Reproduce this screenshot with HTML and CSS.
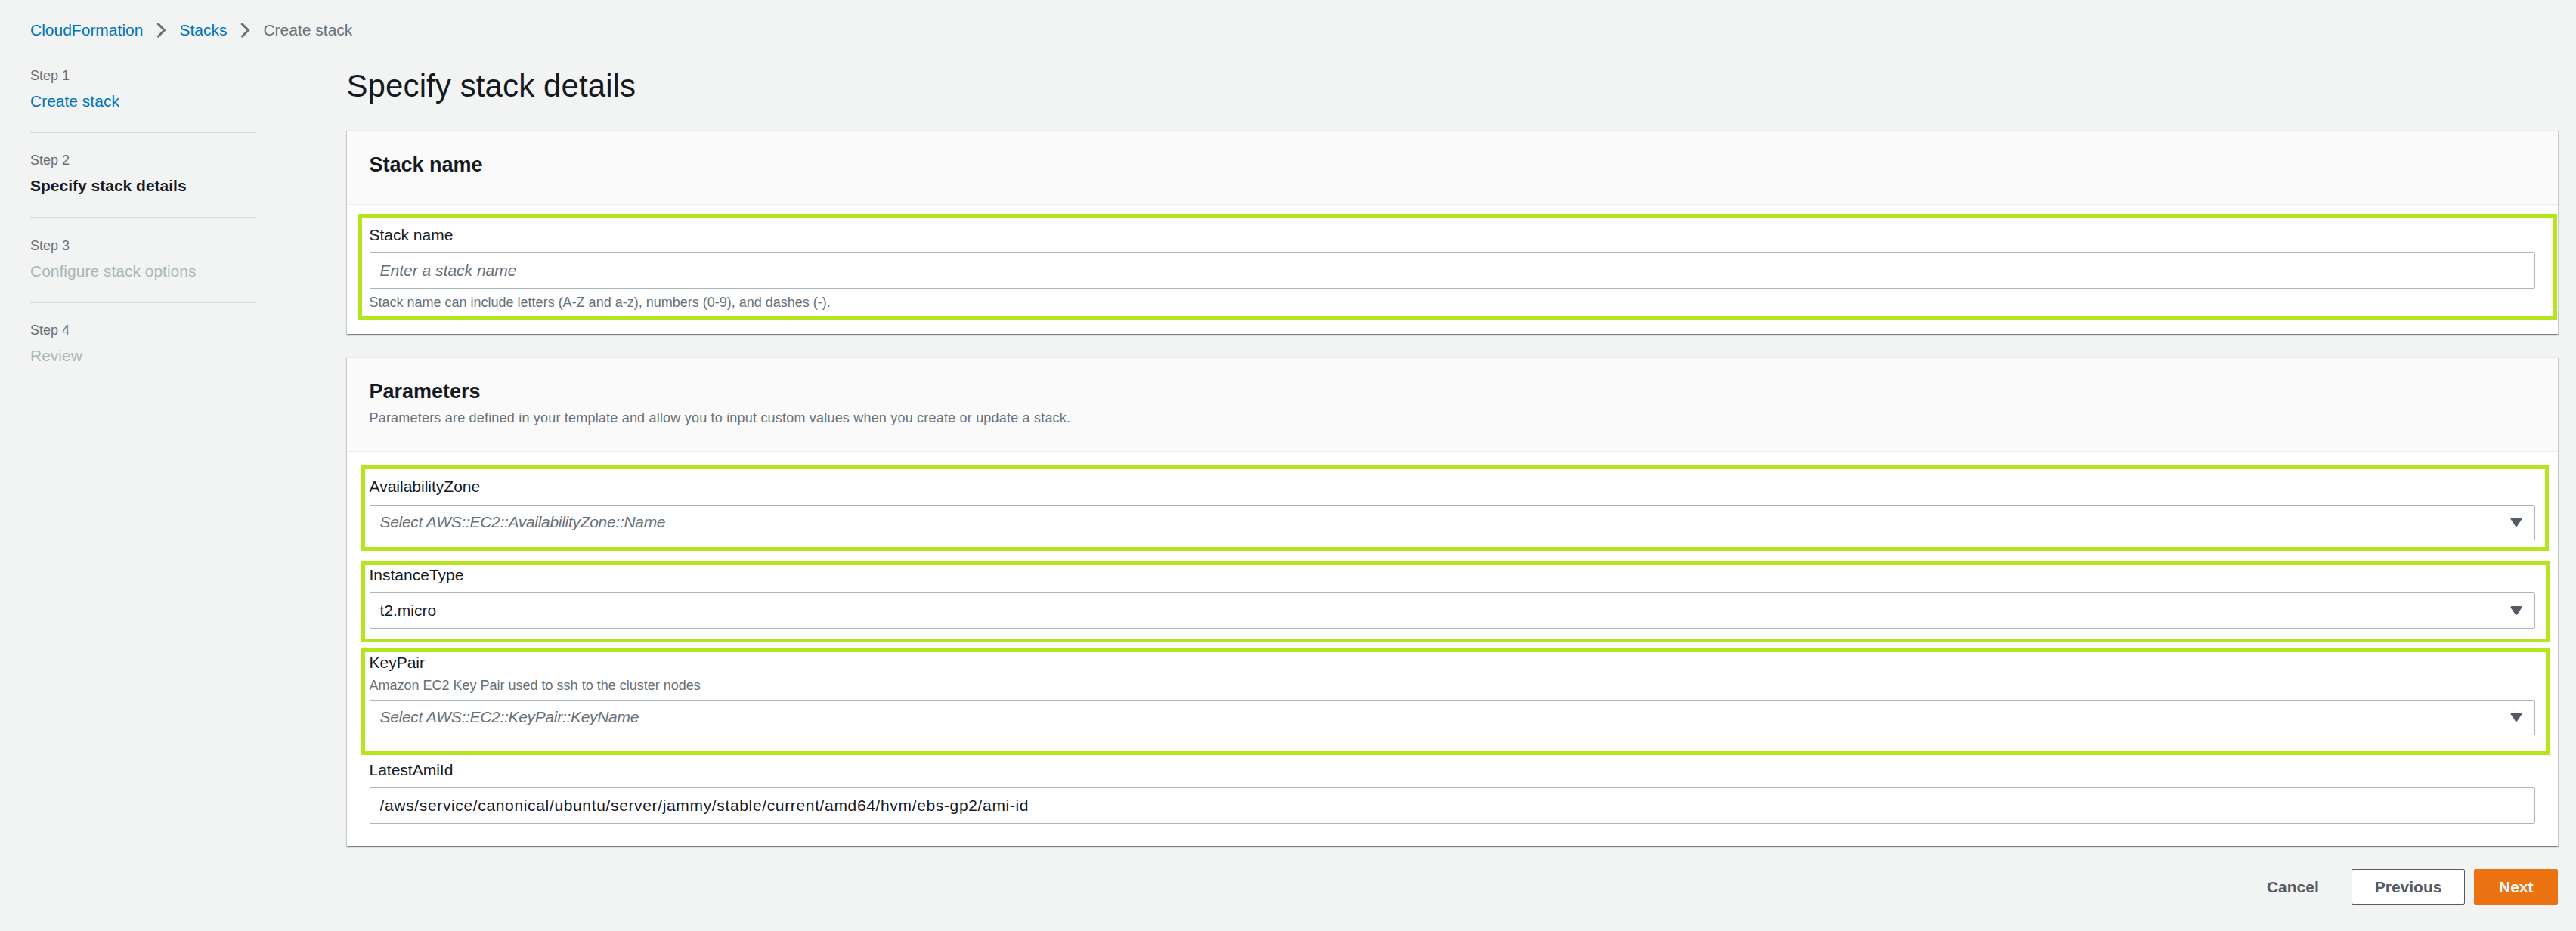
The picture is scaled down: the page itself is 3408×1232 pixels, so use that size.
FILE: index.html
```html
<!DOCTYPE html>
<html lang="en">
<head>
<meta charset="utf-8">
<title>Create stack - CloudFormation</title>
<link rel="stylesheet" href="styles.css">
</head>
<body>
<nav class="breadcrumbs">
  <a class="crumb crumb--link" href="#">CloudFormation</a>
  <svg class="crumb-sep" viewBox="0 0 16 16" width="24" height="24" aria-hidden="true"><path d="M5 2l6 6-6 6" fill="none" stroke="#687078" stroke-width="2"/></svg>
  <a class="crumb crumb--link" href="#">Stacks</a>
  <svg class="crumb-sep" viewBox="0 0 16 16" width="24" height="24" aria-hidden="true"><path d="M5 2l6 6-6 6" fill="none" stroke="#687078" stroke-width="2"/></svg>
  <span class="crumb crumb--current">Create stack</span>
</nav>

<div class="layout">
  <aside class="steps">
    <div class="step">
      <div class="step__label">Step 1</div>
      <a class="step__title step__title--link" href="#">Create stack</a>
    </div>
    <div class="step">
      <div class="step__label">Step 2</div>
      <div class="step__title step__title--active">Specify stack details</div>
    </div>
    <div class="step">
      <div class="step__label">Step 3</div>
      <div class="step__title step__title--disabled">Configure stack options</div>
    </div>
    <div class="step">
      <div class="step__label">Step 4</div>
      <div class="step__title step__title--disabled">Review</div>
    </div>
  </aside>

  <main class="content">
    <h1 class="page-title">Specify stack details</h1>

    <section class="card card--first">
      <header class="card__header card__header--plain">
        <h2 class="card__title">Stack name</h2>
      </header>
      <div class="card__body card__body--name">
        <div class="field mark mark--name">
          <label class="field__label">Stack name</label>
          <input class="control control--input" type="text" placeholder="Enter a stack name">
          <div class="field__hint">Stack name can include letters (A-Z and a-z), numbers (0-9), and dashes (-).</div>
        </div>
      </div>
    </section>

    <section class="card">
      <header class="card__header">
        <h2 class="card__title">Parameters</h2>
        <p class="card__desc">Parameters are defined in your template and allow you to input custom values when you create or update a stack.</p>
      </header>
      <div class="card__body card__body--params">
        <div class="field mark mark--az">
          <label class="field__label">AvailabilityZone</label>
          <div class="control control--select">
            <span class="control__placeholder">Select AWS::EC2::AvailabilityZone::Name</span>
            <svg class="caret" viewBox="0 0 16 16" width="24" height="24" aria-hidden="true"><path d="M4 5h8l-4 6-4-6z" fill="#545b64" stroke="#545b64" stroke-width="2" stroke-linejoin="round"/></svg>
          </div>
        </div>
        <div class="field mark mark--type">
          <label class="field__label">InstanceType</label>
          <div class="control control--select">
            <span class="control__value">t2.micro</span>
            <svg class="caret" viewBox="0 0 16 16" width="24" height="24" aria-hidden="true"><path d="M4 5h8l-4 6-4-6z" fill="#545b64" stroke="#545b64" stroke-width="2" stroke-linejoin="round"/></svg>
          </div>
        </div>
        <div class="field mark mark--key">
          <label class="field__label">KeyPair</label>
          <div class="field__desc">Amazon EC2 Key Pair used to ssh to the cluster nodes</div>
          <div class="control control--select control--after-desc">
            <span class="control__placeholder">Select AWS::EC2::KeyPair::KeyName</span>
            <svg class="caret" viewBox="0 0 16 16" width="24" height="24" aria-hidden="true"><path d="M4 5h8l-4 6-4-6z" fill="#545b64" stroke="#545b64" stroke-width="2" stroke-linejoin="round"/></svg>
          </div>
        </div>
        <div class="field">
          <label class="field__label">LatestAmiId</label>
          <input class="control control--input control--path" type="text" value="/aws/service/canonical/ubuntu/server/jammy/stable/current/amd64/hvm/ebs-gp2/ami-id">
        </div>
      </div>
    </section>

    <div class="actions">
      <button class="btn btn--link" type="button">Cancel</button>
      <button class="btn btn--normal" type="button">Previous</button>
      <button class="btn btn--primary" type="button">Next</button>
    </div>
  </main>
</div>
</body>
</html>
```
FILE: styles.css
```css
* {
  box-sizing: border-box;
}

body {
  margin: 0;
  background: #f2f3f3;
  color: #16191f;
  font-family: "Liberation Sans", Arial, sans-serif;
}

/* Breadcrumbs */
.breadcrumbs {
  display: flex;
  align-items: center;
  height: 56px;
  padding: 23px 0 0 40px;
  font-size: 21px;
  line-height: 33px;
}

.crumb {
  text-decoration: none;
}

.crumb--link {
  color: #0073bb;
}

.crumb--current {
  color: #687078;
}

.crumb-sep {
  display: block;
  margin: 0 12px;
  flex: none;
}

/* Layout */
.layout {
  display: flex;
  align-items: flex-start;
  padding: 0 24px 0 40px;
}

.steps {
  width: 299px;
  flex: none;
  padding-top: 7px;
  margin-right: 119.5px;
}

.step {
  padding: 24.5px 0 25px;
  border-bottom: 1px solid #d5dbdb;
}

.step:last-child {
  border-bottom: none;
}

.step__label {
  font-size: 18px;
  line-height: 24px;
  color: #687078;
}

.step__title {
  display: block;
  margin-top: 5px;
  font-size: 21px;
  line-height: 33px;
  text-decoration: none;
}

.step__title--link {
  color: #0073bb;
}

.step__title--active {
  font-weight: 700;
  color: #16191f;
}

.step__title--disabled {
  color: #aab7b8;
}

.content {
  flex: 1;
  min-width: 0;
}

.page-title {
  margin: 31px 0 0;
  font-size: 42px;
  line-height: 54px;
  font-weight: 400;
  color: #16191f;
  letter-spacing: 0.1px;
}

/* Cards */
.card {
  margin-top: 30.5px;
  background: #fff;
  border-top: 1px solid #eaeded;
  box-shadow: 0 1px 1px 0 rgba(0, 28, 36, 0.3), 1px 1px 1px 0 rgba(0, 28, 36, 0.15), -1px 1px 1px 0 rgba(0, 28, 36, 0.15);
}

.card--first {
  margin-top: 31px;
}

.card__header {
  background: #fafafa;
  border-bottom: 1px solid #eaeded;
  padding: 28.5px 30px 32px;
}

.card__header--plain {
  padding-bottom: 35px;
}

.card__title {
  margin: 0;
  font-size: 27px;
  line-height: 33px;
  font-weight: 700;
  color: #16191f;
}

.card__desc {
  margin: 5.5px 0 0;
  font-size: 18px;
  line-height: 24px;
  color: #687078;
  letter-spacing: 0.2px;
}

.card__body {
  padding: 28px 30px 30px;
}

.card__body--params {
  padding-top: 34.5px;
}

/* Fields */
.field {
  position: relative;
}

.field + .field {
  margin-top: 33.5px;
}

.field__label {
  display: block;
  font-size: 21px;
  line-height: 24px;
  color: #16191f;
}

.field__desc {
  margin-top: 5.5px;
  font-size: 18px;
  line-height: 24px;
  color: #687078;
}

.field__hint {
  margin-top: 6.5px;
  font-size: 18px;
  line-height: 24px;
  color: #687078;
}

.control {
  display: flex;
  align-items: center;
  width: 100%;
  height: 47.5px;
  margin-top: 11.5px;
  padding: 0 12px 0 13px;
  border: 1px solid #aab7b8;
  border-radius: 2px;
  background: #fff;
  font-family: "Liberation Sans", Arial, sans-serif;
  font-size: 21px;
  color: #16191f;
}

.control--after-desc {
  margin-top: 7px;
}

.control--input {
  outline: none;
}

.control--path {
  letter-spacing: 0.65px;
}

.control--input::placeholder {
  color: #687078;
  font-style: italic;
  opacity: 1;
}

.control__placeholder {
  flex: 1;
  color: #687078;
  font-style: italic;
  letter-spacing: -0.3px;
}

.control__value {
  flex: 1;
  color: #16191f;
}

.caret {
  display: block;
  flex: none;
}

/* Annotation highlight boxes drawn over the fields */
.mark::after {
  content: "";
  position: absolute;
  border: 5px solid #b5e61d;
  pointer-events: none;
}

.mark--name::after {
  top: -15.7px;
  bottom: -11.2px;
  left: -14.1px;
  right: -28.7px;
}

.mark--az::after {
  top: -17.4px;
  bottom: -14.2px;
  left: -10.5px;
  right: -17.7px;
}

.mark--type::after {
  top: -5.1px;
  bottom: -18.6px;
  left: -10.5px;
  right: -18.5px;
}

.mark--key::after {
  top: -6.7px;
  bottom: -26.2px;
  left: -10.5px;
  right: -19px;
}

/* Actions */
.actions {
  display: flex;
  justify-content: flex-end;
  align-items: center;
  gap: 12px;
  margin-top: 30px;
}

.btn {
  height: 47.5px;
  padding: 0 30px;
  border: 1px solid transparent;
  border-radius: 2px;
  background: none;
  font-family: "Liberation Sans", Arial, sans-serif;
  font-size: 21px;
  line-height: 33px;
  font-weight: 700;
  cursor: pointer;
}

.btn--link {
  color: #545b64;
}

.btn--normal {
  background: #fff;
  border-color: #545b64;
  color: #545b64;
}

.btn--primary {
  background: #ec7211;
  border-color: #ec7211;
  color: #fff;
  padding: 0 31.5px;
}
```
